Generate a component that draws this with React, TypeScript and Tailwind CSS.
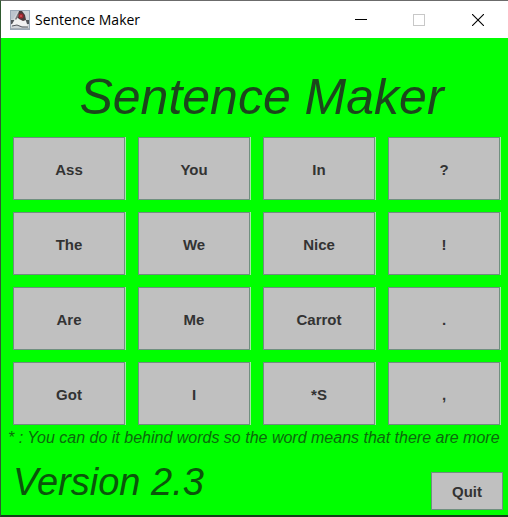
const words = [
  'Ass', 'You', 'In', '?',
  'The', 'We', 'Nice', '!',
  'Are', 'Me', 'Carrot', '.',
  'Got', 'I', '*S', ',',
];

const swingButton =
  'bg-[#c0c0c0] border border-[#6f8f7f] pt-[3px] font-bold text-[15px] text-[#333333] hover:brightness-105';

function JavaIcon() {
  return (
    <svg width="20" height="20" viewBox="0 0 20 20" aria-hidden="true">
      <rect width="20" height="20" fill="#9aa7b5" />
      <rect x="1" y="1" width="18" height="18" fill="#d0d4d9" />
      <path d="M1 1h7L3 9H1z" fill="#bcc4cd" />
      <path d="M1 10h5v4H1zM14 10h5v4h-5z" fill="#53575c" />
      <path d="M8 3L5 9l-4 7 6-1 5 1 6 1-2-6-2-6-3-3z" fill="#f1f1f1" />
      <path d="M9 1l3 0 3 4 1 5-3 1-4-2-2-2z" fill="#4b3a3d" />
      <path d="M8 3L5 9l1 1 3-4z" fill="#77757a" />
      <circle cx="11" cy="6" r="2.5" fill="#a3262f" />
      <circle cx="11" cy="6" r="1" fill="#cf545c" />
      <path d="M2 16l5-1 5 2 6 0" fill="none" stroke="#55595f" strokeWidth="1" />
      <path d="M1 18h18v1H1z" fill="#a7aeb7" />
    </svg>
  );
}

function TitleBar() {
  return (
    <header className="flex h-[37px] items-center bg-white pl-[9px]">
      <JavaIcon />
      <span className="ml-[5px] flex-1 font-['Open_Sans',sans-serif] text-[14px] text-black">
        Sentence Maker
      </span>
      <div className="flex h-full">
        <button aria-label="Minimize" className="flex w-[58px] items-center justify-center">
          <svg width="12" height="12" viewBox="0 0 12 12">
            <path d="M0 5.5h12" stroke="#000" />
          </svg>
        </button>
        <button aria-label="Maximize" disabled className="flex w-[58px] items-center justify-center">
          <svg width="12" height="12" viewBox="0 0 12 12">
            <rect x="0.5" y="0.5" width="11" height="11" fill="none" stroke="#c8c8c8" />
          </svg>
        </button>
        <button aria-label="Close" className="flex w-[60px] items-center justify-center">
          <svg width="12" height="12" viewBox="0 0 12 12">
            <path d="M0 0l12 12M12 0L0 12" stroke="#000" strokeWidth="1.1" />
          </svg>
        </button>
      </div>
    </header>
  );
}

export default function App() {
  return (
    <div className="flex min-h-screen flex-col border-t border-b-2 border-l border-t-[#6b6b6b] border-b-[#14401a] border-l-[#2f5a2f] bg-[#00ff00] font-['Liberation_Sans',Arial,sans-serif]">
      <TitleBar />
      <main className="flex flex-1 flex-col">
        <h1 className="pt-8 pl-[14px] text-center text-[50px] leading-[54px] text-[#1c461c] italic">
          Sentence Maker
        </h1>
        <div className="mt-[13px] grid grid-cols-4 gap-x-[13px] gap-y-3 pr-2 pl-3">
          {words.map((word) => (
            <button key={word} className={`h-[63px] shadow-[1px_0_0_#a6e8a6] ${swingButton}`}>
              {word}
            </button>
          ))}
        </div>
        <p className="mt-[3px] pl-[7px] text-[16px] leading-5 whitespace-nowrap text-[#0c6a0c] italic">
          * : You can do it behind words so the word means that there are more
        </p>
        <div className="mt-auto flex items-end justify-between pr-[5px] pb-[5px] pl-3">
          <p className="text-[38px] leading-[56px] text-[#0b560b] italic">Version 2.3</p>
          <button className={`h-[38px] w-[72px] ${swingButton}`}>Quit</button>
        </div>
      </main>
    </div>
  );
}
